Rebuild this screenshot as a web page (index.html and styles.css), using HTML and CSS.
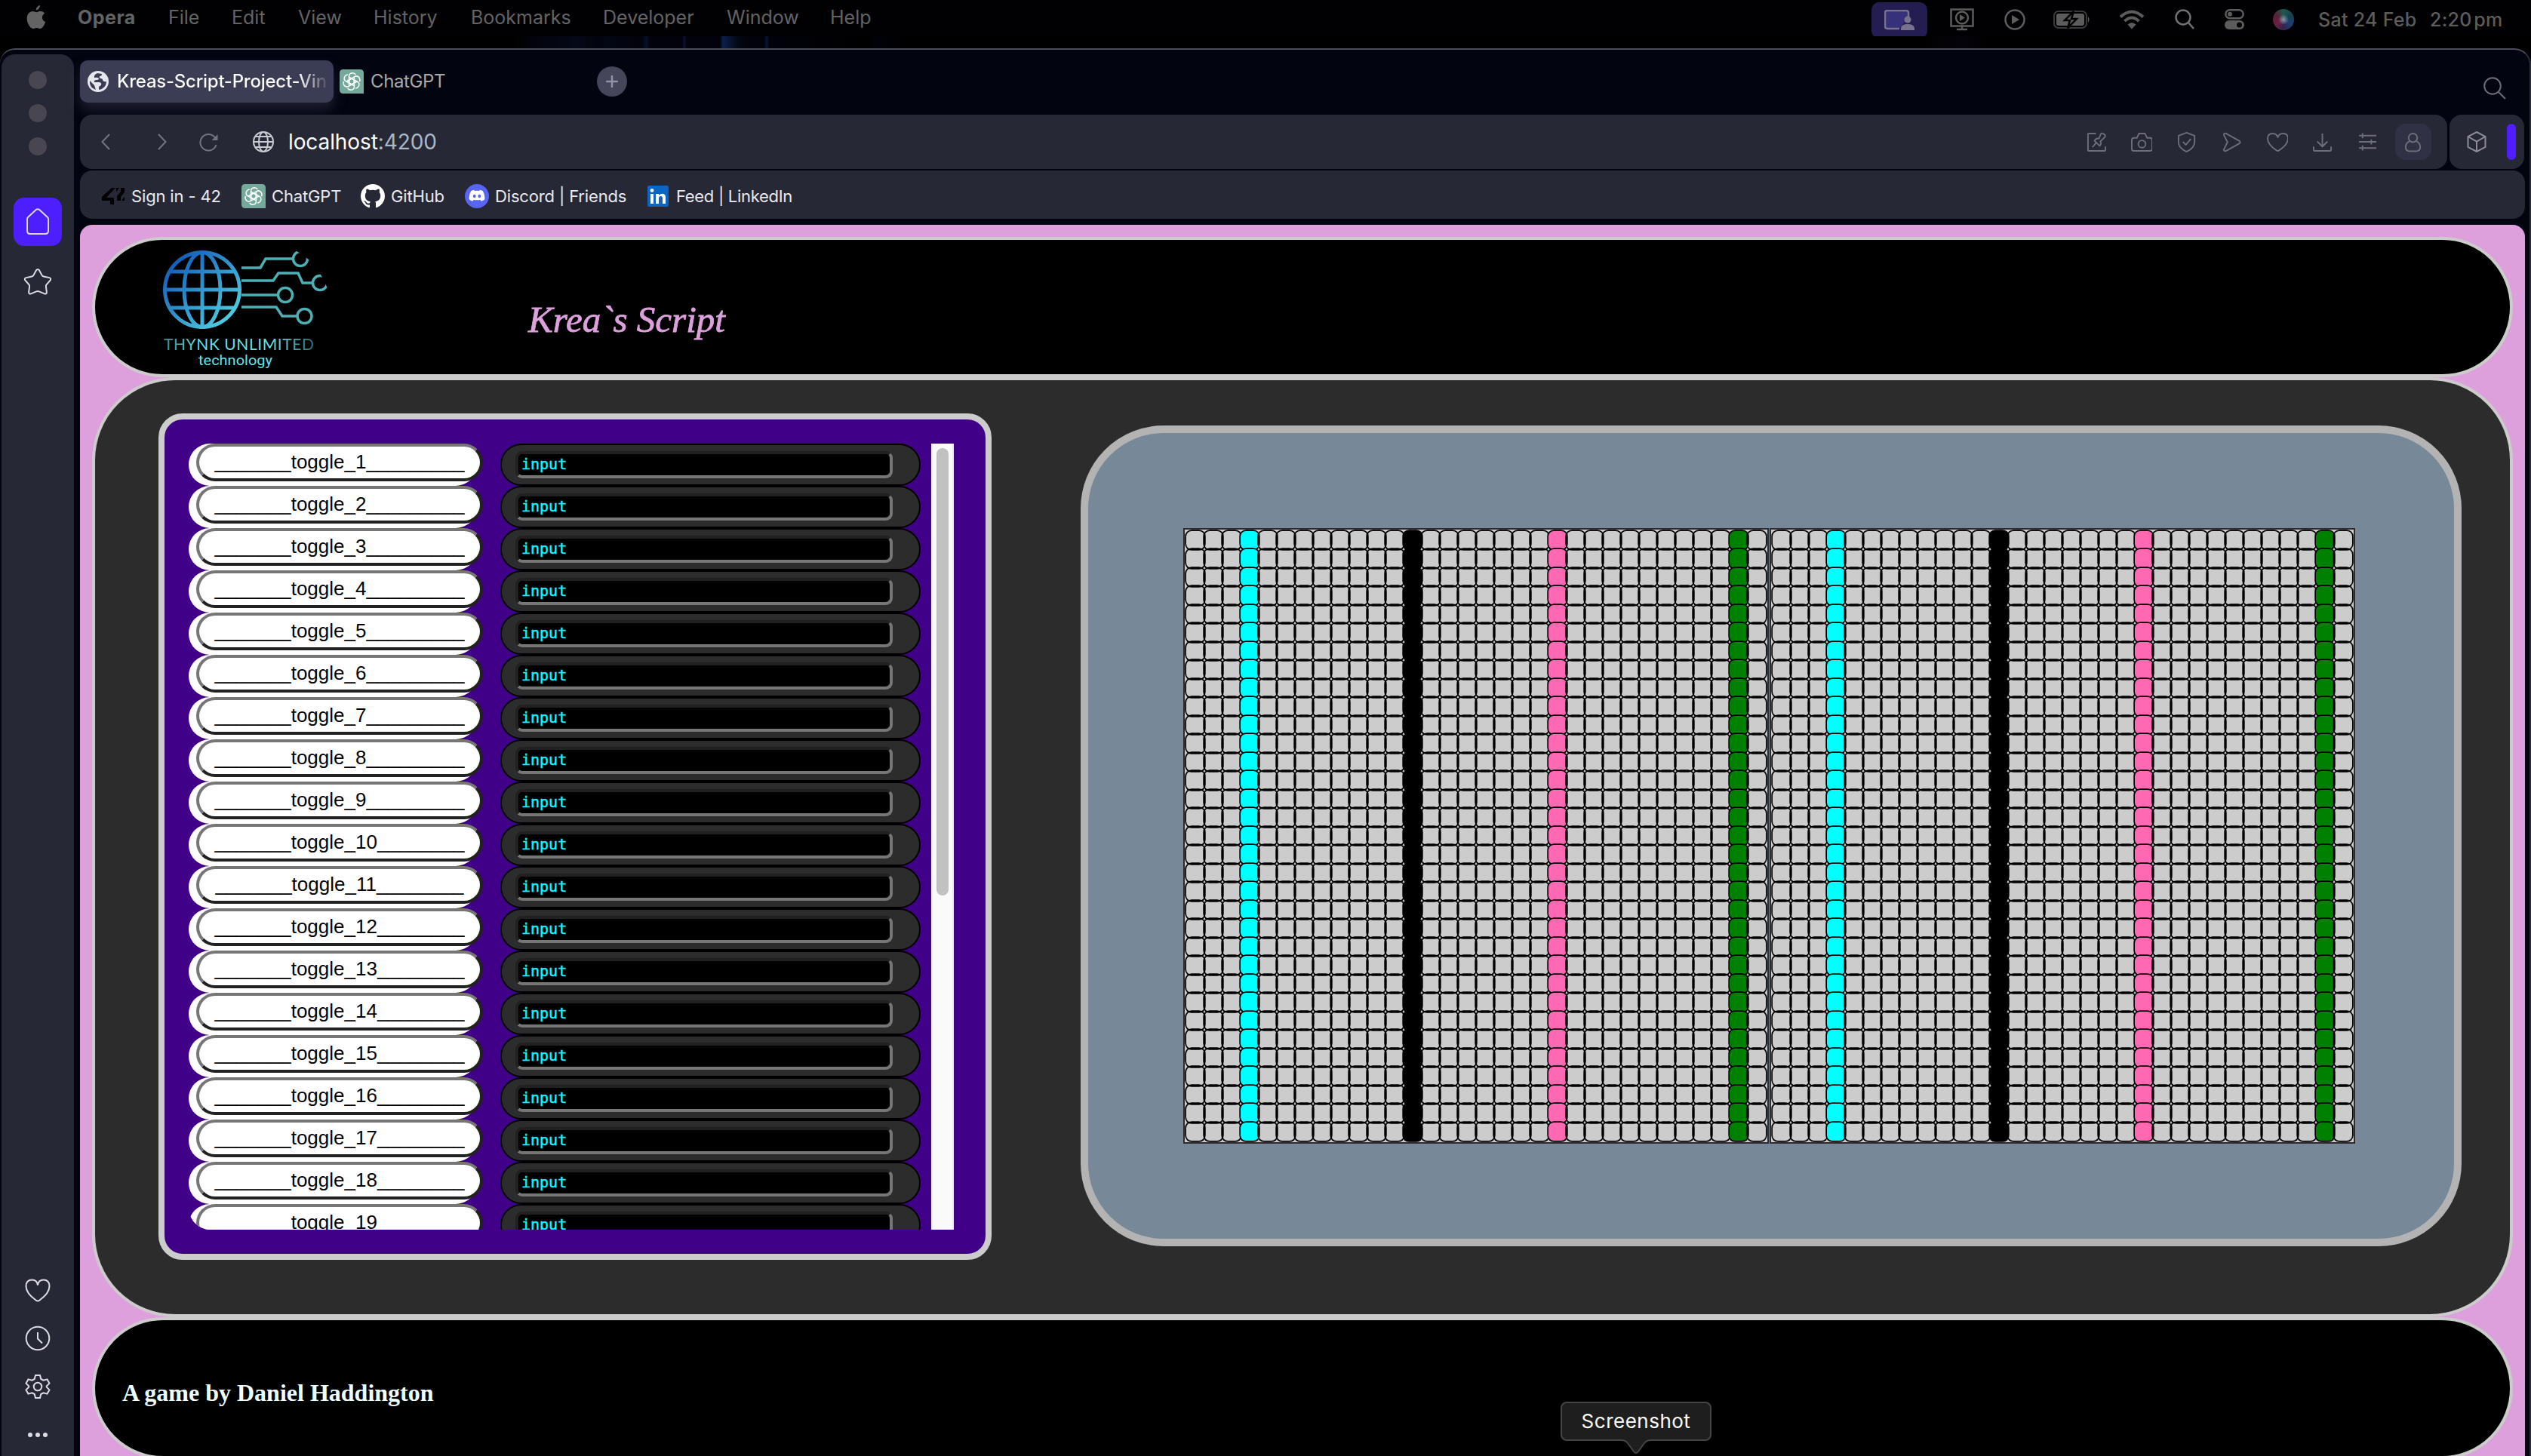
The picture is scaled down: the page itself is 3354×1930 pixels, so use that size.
FILE: index.html
```html
<!DOCTYPE html>
<html lang="en">
<head>
<meta charset="utf-8">
<title>Kreas-Script-Project</title>
<link rel="stylesheet" href="styles.css">
</head>
<body>
<header class="menubar">
  <nav class="menus">
    <svg class="apple" width="26" height="32" viewBox="0 0 26 32"><path d="M18 0c.3 3-2.300 6.400-5.200 6.500C12.500 3.600 15.200.500 18 0zM13.400 9.200c1.200 0 2.900-1.500 5.300-1.500 2.200 0 4.300 1.200 5.500 3-4.800 2.900-4 9.400 1 11.300C24 25.500 21.400 31 18.400 31c-1.800 0-2.500-1.100-4.800-1.100S10.500 31 8.900 31C5 31 .7 23.800.7 17.600.7 11.500 4.500 8.100 8.100 8.100c2.300 0 4 1.100 5.300 1.100z"/></svg>
    <b class="m">Opera</b><span class="m">File</span><span class="m">Edit</span><span class="m">View</span><span class="m">History</span><span class="m">Bookmarks</span><span class="m">Developer</span><span class="m">Window</span><span class="m">Help</span>
  </nav>
  <div class="status">
    <span class="share"><svg width="40" height="28" viewBox="0 0 40 28"><path d="M32 10V4q0-3-3-3H4Q1 1 1 4v18q0 3 3 3h16" fill="#37307a" stroke="#77738f" stroke-width="2.500"/><circle cx="31" cy="13" r="4.500" fill="#77738f"/><path d="M22 27v-3q1-5 9-5t9 5v3z" fill="#77738f"/></svg></span>
    <svg width="32" height="30" viewBox="0 0 32 30"><path d="M1.500 1.500h29v22h-29zM16 24v4M9 28h14" class="g"/><circle cx="16" cy="12.500" r="8" class="g"/><path d="M13 8l7 4.500-7 4.500z" class="gf"/></svg>
    <svg width="28" height="28" viewBox="0 0 28 28"><circle cx="14" cy="14" r="12.500" class="g"/><path d="M10 8l10 6-10 6z" class="gf"/></svg>
    <svg width="49" height="24" viewBox="0 0 49 24"><rect x="1" y="1" width="43" height="22" rx="6" class="g thin"/><rect x="4" y="4" width="37" height="16" rx="3" class="gf"/><path d="M46 8q3 4 0 8z" class="gf"/><path d="M27 1L15 13h7l-3 10 12-12h-7z" fill="#5c5c5c" stroke="#000" stroke-width="2.500"/></svg>
    <svg width="34" height="26" viewBox="0 0 34 26"><path d="M2 9.500q15-14 30 0M7.500 15q9.500-9 19 0" class="g wifi"/><path d="M11.500 19.500q5.500-5 11 0L17 25.500z" class="gf"/></svg>
    <svg width="26" height="28" viewBox="0 0 26 28"><circle cx="11" cy="11" r="9.500" class="g w"/><path d="M18 18l7 8" class="g w"/></svg>
    <svg width="26" height="28" viewBox="0 0 26 28"><rect x="1.300" y="1.300" width="23.400" height="11" rx="5.500" class="g"/><circle cx="7" cy="6.800" r="3" class="gf"/><rect y="15" width="26" height="12" rx="6" class="gf"/><circle cx="19.500" cy="21" r="3.500" fill="#060606"/></svg>
    <i class="siri"></i>
    <span class="m t">Sat 24 Feb</span><span class="m t">2:20&#8202;pm</span>
  </div>
</header>
<div class="wall"></div>
<div class="window">
  <aside class="side">
    <div class="lights"><i></i><i></i><i></i></div>
    <span class="home"><svg width="32" height="36" viewBox="0 0 32 36"><path d="M2 14.500q0-1.500 1-2.500L13.500 2.200q2.500-2 5 0L29 12q1 1 1 2.500V30q0 4-4 4H6q-4 0-4-4z"/></svg></span>
    <svg class="star" width="38" height="38" viewBox="0 0 38 38"><path d="M17 3.200q2-2.400 4 0l3.700 6.900q.7 1.200 2.100 1.500l7.700 1.500q2.600.8 1.200 3.300l-5 5.800q-1 1.200-.8 2.600l1 7.400q-.1 2.900-2.900 2.200l-7.200-3q-1.800-.7-3.600 0l-7.200 3q-2.800.7-2.900-2.200l1-7.400q.2-1.400-.8-2.600l-5-5.800q-1.400-2.500 1.200-3.300l7.700-1.500q1.400-.3 2.100-1.500z"/></svg>
    <div class="tools">
      <svg width="34" height="34" viewBox="0 0 34 34"><path d="M17 10.500Q16 3.500 9.500 3.500 1.500 3.500 1.500 12q0 9 13 18.500 2.500 2 5 0 13-9.500 13-18.500 0-8.500-8-8.500-6.500 0-7.500 7z"/></svg>
      <svg width="34" height="34" viewBox="0 0 34 34"><circle cx="17" cy="17" r="15.300"/><path d="M17 9v8.500l6 6"/></svg>
      <svg width="34" height="34" viewBox="0 0 34 34"><path d="M14 2h6l1.300 5 3.200 1.700 5-1.300 3 5.200-3.700 3.700v1.400l3.700 3.700-3 5.200-5-1.300L21.300 27 20 32h-6l-1.300-5-3.200-1.700-5 1.300-3-5.200 3.700-3.700v-1.400L1.500 12.600l3-5.200 5 1.300L12.700 7z"/><circle cx="17" cy="17" r="5.300"/></svg>
      <svg width="34" height="34" viewBox="0 0 34 34"><g fill="#dcdce4" stroke="none"><circle cx="7" cy="17" r="3"/><circle cx="17" cy="17" r="3"/><circle cx="27" cy="17" r="3"/></g></svg>
    </div>
  </aside>
  <div class="browser">
    <div class="tabs">
      <div class="tab on"><svg width="28" height="28" viewBox="0 0 28 28"><circle cx="14" cy="14" r="14" fill="#e4e8ee"/><path d="M13 3q-5 2-4 6 5-1 6 1 0 2-4 2-3 1-2 3h6q4 0 3 4-3 1-3 3v3q10-2 10-11-4 1-5-2 0-2-3-2-2-1-1-3 3 0 3-3zM3 13l6 6q1 3 2 6Q2 22 3 13z" fill="#3b3d54"/></svg><span class="tt">Kreas-Script-Project-Vin</span></div>
      <div class="tab"><svg width="32" height="32" viewBox="0 0 32 32"><use href="#gpt"/></svg><span class="name">ChatGPT</span></div>
      <i class="plus"><svg width="16" height="16" viewBox="0 0 16 16"><path d="M8 1v14M1 8h14" stroke="#9193ab" stroke-width="2.500" stroke-linecap="round"/></svg></i>
      <svg class="find" width="30" height="30" viewBox="0 0 30 30"><circle cx="12" cy="12" r="10.800"/><path d="M20 20l9 9"/></svg>
    </div>
    <div class="row">
      <div class="bar addr">
        <svg class="nav" width="12" height="22" viewBox="0 0 12 22"><path d="M11 1L1.500 11 11 21"/></svg>
        <svg class="nav" width="12" height="22" viewBox="0 0 12 22"><path d="M1 1l9.500 10L1 21"/></svg>
        <svg class="nav" width="26" height="26" viewBox="0 0 26 26"><path d="M22.500 17A10.800 10.800 0 1 1 21 7.500"/><path d="M24.500 3v8h-8z" fill="#737480" stroke="none"/></svg>
        <svg class="nav" width="28" height="28" viewBox="0 0 28 28"><g stroke="#c9ccd0" stroke-width="2"><circle cx="14" cy="14" r="13"/><ellipse cx="14" cy="14" rx="6" ry="13"/><path d="M1 14h26M3.500 7h21M3.500 21h21"/></g></svg>
        <p class="url">localhost<span>:4200</span></p>
        <div class="acts">
          <svg viewBox="0 0 28 28"><path d="M13 2H3q-1 0-1 1v22q0 1 1 1h22q1 0 1-1v-5M13 15l-5 6M11 12l7 7q3-3 1-6l6-6q2-2-1-4t-4-1l-3 7q-4-1-6 3z"/></svg>
          <svg viewBox="0 0 30 28"><path d="M4 8h4l3-6h8l3 6h4q3 0 3 3v12q0 3-3 3H4q-3 0-3-3V11q0-3 3-3z"/><circle cx="15" cy="16.500" r="5"/></svg>
          <svg viewBox="0 0 26 28"><path d="M13 1l11 4v9q0 8-11 13Q2 22 2 14V5z"/><path d="M8 13.500l4 4 7-8"/></svg>
          <svg viewBox="0 0 26 28"><path d="M2 4q0-3 3-2l18 10q3 2 0 4L5 26q-3 1-3-2l5-10z"/></svg>
          <svg viewBox="0 0 30 28"><path d="M15 8Q14 2 8 2 1 2 1 9q0 8 12 16 2 2 4 0Q29 17 29 9q0-7-7-7-6 0-7 6z"/></svg>
          <svg viewBox="0 0 26 28"><path d="M13 2v18M6 13l7 7 7-7M1 20v4q0 2 2 2h20q2 0 2-2v-4"/></svg>
          <svg viewBox="0 0 26 28"><path d="M1 5h24M1 13.500h24M1 22h24M6 1.500v7M18 10v7M6 18.500v7"/></svg>
          <span class="me"><svg viewBox="0 0 26 28"><circle cx="13" cy="8" r="6"/><path d="M8.500 12.500Q3 15 3 20.500 3 26.500 9 26.500h8q6 0 6-6 0-5.500-5.500-8"/></svg></span>
        </div>
      </div>
      <div class="bar ext"><svg width="26" height="28" viewBox="0 0 26 28"><path d="M13 1l11.500 6v14L13 27 1.500 21V7zM1.500 7L13 13.500 24.500 7M13 13.500V27"/></svg><i></i></div>
    </div>
    <div class="bar marks">
      <span><svg width="32" height="32" viewBox="0 0 32 32"><path d="M14 5L1 17v5h11v5h5v-9H7L19 5zM20 5h4l-4 5zM31 5v6l-5 6v5h-5v-6l5-6V5zM31 17v5h-4z" fill="#000"/></svg><em>Sign in - 42</em></span>
      <span><svg width="32" height="32" viewBox="0 0 32 32"><use href="#gpt"/></svg><em>ChatGPT</em></span>
      <span><svg width="32" height="32" viewBox="0 0 16 16"><path fill="#fff" d="M8 0C3.580 0 0 3.580 0 8c0 3.540 2.290 6.530 5.470 7.590.4.070.55-.17.55-.38 0-.19-.01-.82-.01-1.490-2.010.37-2.530-.49-2.690-.94-.09-.23-.48-.94-.82-1.130-.28-.15-.68-.52-.01-.53.63-.01 1.080.58 1.230.82.72 1.210 1.870.87 2.330.66.07-.52.28-.87.51-1.070-1.780-.2-3.640-.89-3.640-3.950 0-.87.31-1.590.82-2.150-.08-.2-.36-1.020.08-2.120 0 0 .67-.21 2.200.82.64-.18 1.320-.27 2-.27s1.360.09 2 .27c1.530-1.040 2.200-.82 2.200-.82.44 1.100.16 1.920.08 2.120.51.56.82 1.270.82 2.150 0 3.070-1.870 3.750-3.650 3.950.29.25.54.73.54 1.480 0 1.070-.01 1.930-.01 2.200 0 .21.15.46.55.38A8.010 8.010 0 0 0 16 8c0-4.420-3.580-8-8-8z"/></svg><em>GitHub</em></span>
      <span><svg width="32" height="32" viewBox="0 0 32 32"><circle cx="16" cy="16" r="16" fill="#5865f2"/><path d="M13 9q3-.6 6 0l.8-1.300q2.200.4 4 1.500 3 5 2.500 11-2 1.800-4.600 2.500l-1.200-2q-4.500 1.300-9 0l-1.200 2q-2.600-.7-4.600-2.500-.5-6 2.500-11 1.800-1.100 4-1.500z" fill="#fff"/><ellipse cx="12.700" cy="16" rx="1.900" ry="2.200" fill="#5865f2"/><ellipse cx="19.300" cy="16" rx="1.900" ry="2.200" fill="#5865f2"/></svg><em>Discord | Friends</em></span>
      <span><svg width="32" height="32" viewBox="0 0 32 32"><rect x="2" y="2" width="28" height="28" rx="2" fill="#0a66c2"/><path fill="#fff" d="M6 13h4v13H6zM13 13h4v2q4-4 8-1 1 1 1 4v8h-4v-7q0-3-2.500-3T17 19v7h-4z"/><circle cx="8" cy="8.500" r="2.400" fill="#fff"/></svg><em class="feed">Feed | LinkedIn</em></span>
    </div>
    <div class="page">
      <div class="head">
        <svg width="226" height="166" viewBox="214 326 226 166" fill="none">
          <defs><linearGradient id="sea" gradientUnits="userSpaceOnUse" x1="232" y1="348" x2="304" y2="422"><stop offset="0" stop-color="#1460bb"/><stop offset="1" stop-color="#4fcbe0"/></linearGradient>
          <linearGradient id="fade" x1="0" x2="1" y1="0" y2="0"><stop offset="0" stop-color="#3d878c"/><stop offset=".25" stop-color="#66e3ea"/><stop offset=".72" stop-color="#66e3ea"/><stop offset="1" stop-color="#2f6a6e"/></linearGradient>
          <clipPath id="oval"><path d="M214 326h170l8 6 17 12 15 18 10 20v110H214z"/></clipPath></defs>
          <g stroke="url(#sea)" stroke-width="5"><circle cx="268" cy="384" r="49.500"/><ellipse cx="268" cy="384" rx="24" ry="49.500"/><path d="M268.010 334L268 434M225 360h86M218 384h100M225 408h86"/></g>
          <g stroke="#4cb0b5" stroke-width="3.500" clip-path="url(#oval)"><path d="M320 355h25l7-12h37M320 372h42l7-10h26l6 13h13M320 391h49M320 407h46l8 12h20"/><circle cx="398" cy="343" r="9.500"/><circle cx="424" cy="375" r="9.500"/><circle cx="378" cy="391" r="9.500"/><circle cx="403.500" cy="419" r="9.500"/></g>
          <text x="217" y="464" textLength="199" font-family="Lato" font-size="21" fill="url(#fade)">THYNK UNLIMITED</text>
          <text x="263" y="484" textLength="98" lengthAdjust="spacingAndGlyphs" font-family="Roboto" font-size="18" fill="#66e3ea">technology</text>
        </svg>
        <h1>Krea`s Script</h1>
      </div>
      <div class="main">
        <div class="panel">
          <div class="toggles" id="toggles"></div>
          <div class="inputs" id="inputs"></div>
          <div class="track"><i></i></div>
        </div>
        <div class="board"><div class="mem"></div><div class="mem"></div></div>
      </div>
      <div class="foot"><h3>A game by Daniel Haddington</h3></div>
    </div>
  </div>
</div>
<div class="tip"><span>Screenshot</span><svg width="40" height="20" viewBox="0 0 40 20"><path d="M0 0v1q6 0 9 4l8 11q3 4 6 0l8-11q3-4 9-4V0z" fill="#1e1e1e"/><path d="M0 1q6 0 9 4l8 11q3 4 6 0l8-11q3-4 9-4" fill="none" stroke="#454545" stroke-width="2"/></svg></div>
<svg width="0" height="0" class="defs"><symbol id="gpt" viewBox="0 0 32 32"><path d="M0 5q0-5 5-5h22q5 0 5 5v27H5q-5 0-5-5z" fill="#74aa9c"/><g fill="none" stroke="#fff" stroke-width="1.500"><g id="petal"><path d="M12.500 18V9.500q0-4.500 4.500-4.700 3 0 4.300 2.200M12.500 18l3.500 2 7.300-4.200"/></g><use href="#petal" transform="rotate(60 16 16)"/><use href="#petal" transform="rotate(120 16 16)"/><use href="#petal" transform="rotate(180 16 16)"/><use href="#petal" transform="rotate(240 16 16)"/><use href="#petal" transform="rotate(300 16 16)"/></g></symbol></svg>
<script src="script.js"></script>
</body>
</html>
```
FILE: script.js
```js
// Fill the toggle and input lists
const toggles = document.getElementById('toggles');
const inputs = document.getElementById('inputs');
for (let i = 1; i <= 19; i++) {
  const row = document.createElement('div');
  row.className = 'toggle';
  const button = document.createElement('button');
  button.textContent = '_______toggle_' + i + '_'.repeat(i < 10 ? 9 : 8);
  row.append(button);
  toggles.append(row);

  const slot = document.createElement('div');
  slot.className = 'slot';
  const field = document.createElement('div');
  field.className = 'field';
  field.textContent = 'input';
  slot.append(field);
  inputs.append(slot);
}

// Each memory block is 32 columns by 33 rows, with four marked columns
const marks = { 3: 'cyan', 12: 'black', 20: 'pink', 30: 'green' };
for (const mem of document.querySelectorAll('.mem')) {
  for (let r = 0; r < 33; r++) {
    for (let c = 0; c < 32; c++) {
      const cell = document.createElement('i');
      if (marks[c]) cell.className = marks[c];
      mem.append(cell);
    }
  }
}
```
FILE: styles.css
```css
* { box-sizing: border-box; }
body { margin: 0; width: 3354px; height: 1930px; overflow: hidden; background: #000; font-family: Inter, sans-serif; display: flex; flex-direction: column; position: relative; }
h1, h3, p { margin: 0; }
svg { display: block; flex: none; }
.defs { position: absolute; }

.menubar { height: 48px; flex: none; display: flex; justify-content: space-between; background: #010103; color: #636363; font-size: 25px; }
.menus { display: grid; grid-template-columns: 68px 120px 84px 88px 100px 129px 175px 164px 137px 100px; padding-left: 35px; align-items: center; height: 45px; }
.menus b { font-weight: 700; letter-spacing: .5px; }
.m { white-space: nowrap; }
.apple { fill: #636363; }
.status { width: 874px; display: grid; grid-template-columns: 104px 72px 65px 87px 74px 66px 64px 60px 148px 134px; align-items: center; height: 45px; }
.share { width: 74px; height: 48px; margin-top: 3px; background: #241d52; border-radius: 10px; display: grid; place-items: center; }
.g { fill: none; stroke: #5c5c5c; stroke-width: 2.5; }
.wifi { stroke-width: 4; }
.thin { stroke: #3a3a3a; stroke-width: 2; }
.w { stroke: #707070; }
.gf { fill: #5c5c5c; }
.t { color: #5c5c5c; font-weight: 500; letter-spacing: .3px; }
.siri { width: 28px; height: 28px; border-radius: 50%; background: radial-gradient(circle, #7d9aa8 0, transparent 35%), conic-gradient(#1c5b50, #17414f, #1c3f73, #33234f, #6d1f42, #5a2034, #1c5b50); }
.wall { height: 16px; flex: none; background: linear-gradient(90deg, transparent 680px, #02030a 700px, #040818 765px, #02040c 790px, #030714 805px, #01020a 850px, #07102a 857px, #01020a 861px, #01020a 904px, #081333 907px, #01020a 910px, #01020a 954px, #0b1e4c 958px, #040a18 975px, #01020a 990px, #01020a 1013px, #09173c 1016px, #01020a 1019px, #000 1150px, #01020a 1160px, #000 1200px, #000 2540px, #05030a 2600px, #000 2640px); }

.window { flex: 1; min-height: 0; display: flex; gap: 8px; background: #020410; border: 2px solid #4b4c55; border-right-color: #2c2d3c; border-left: 0; border-bottom: 0; border-radius: 20px 22px 0 0; padding: 6px 6px 0 2px; }
.side { width: 96px; flex: none; background: #272835; border-radius: 18px 18px 0 0; display: flex; flex-direction: column; align-items: center; padding-top: 22px; }
.lights { display: flex; flex-direction: column; gap: 20px; }
.lights i { width: 24px; height: 24px; border-radius: 50%; background: #474651; }
.side svg { fill: none; stroke: #dcdce4; stroke-width: 2; }
.home { width: 64px; height: 64px; margin-top: 56px; border-radius: 14px; background: #4d1fff; display: grid; place-items: center; }
.star { margin-top: 29px; }
.tools { margin-top: auto; display: flex; flex-direction: column; gap: 30px; padding-bottom: 11px; }

.browser { width: 3240px; display: flex; flex-direction: column; }
.tabs { height: 80px; padding-top: 8px; display: flex; flex: none; }
.tab { height: 55px; display: flex; align-items: center; gap: 9px; margin-left: 8px; color: #a9a9ab; font-size: 24px; white-space: nowrap; }
.tab.on { width: 336px; height: 56px; margin-left: 0; padding-left: 10px; gap: 11px; background: #3b3d54; border-radius: 10px; color: #fff; box-shadow: 0 10px 18px rgba(80, 82, 110, .35); overflow: hidden; font-weight: 500; }
.tt { letter-spacing: -.25px; padding-bottom: 1px; background: linear-gradient(90deg, #fff 240px, #3b3d54 282px); -webkit-background-clip: text; background-clip: text; color: transparent; }
.name { letter-spacing: -.4px; }
.plus { width: 40px; height: 40px; border-radius: 50%; background: #45465a; margin: 8px 0 0 201px; display: grid; place-items: center; }
.find { fill: none; stroke: #6d6e78; stroke-width: 2; margin: 22px 25px 0 auto; }
.row { display: flex; gap: 3px; flex: none; }
.bar { background: #272835; border-radius: 16px; }
.addr { width: 3137px; height: 72px; display: flex; align-items: center; padding: 0 15px 0 28px; }
.nav { fill: none; stroke: #737480; stroke-width: 2; margin-right: 63px; }
.nav:nth-child(2) { margin-right: 43px; }
.nav:nth-child(3) { margin-right: 45px; }
.nav:nth-child(4) { margin-right: 19px; }
.url { font-size: 28px; letter-spacing: -.1px; color: #fff; white-space: nowrap; }
.url span { color: #a9b8c6; }
.acts { margin-left: auto; display: grid; grid-template-columns: repeat(8, 60px); place-items: center; }
.acts svg { height: 27px; fill: none; stroke: #6d6e7a; stroke-width: 2; }
.me { width: 48px; height: 48px; border-radius: 14px; background: #303144; display: grid; place-items: center; }
.ext { width: 99px; height: 72px; display: flex; align-items: center; justify-content: space-between; padding: 0 11px 0 23px; }
.ext svg { fill: none; stroke: #8b8c96; stroke-width: 2; }
.ext i { width: 12px; height: 48px; border-radius: 6px; background: #4d1fff; }
.marks { height: 64px; margin-top: 2px; flex: none; display: grid; grid-template-columns: 186px 158px 138px 240px 300px; padding: 4px 0 0 28px; color: #e9eaf0; font-size: 22px; line-height: 28px; align-items: center; align-content: center; }
.marks span { display: flex; align-items: center; gap: 8px; white-space: nowrap; }
.marks em { font-style: normal; letter-spacing: -.15px; }
.marks .feed { letter-spacing: -.3px; }

.page { flex: 1; min-height: 0; margin-top: 8px; background: #dda0dd; border-radius: 16px 16px 0 0; padding: 16px 16px 0; overflow: hidden; }
.head { height: 186px; background: #000; border: 4px solid #ccc; border-radius: 93px; display: flex; padding: 8px 0 0 88px; }
.head h1 { margin: 68px 0 0 260px; color: #dda0dd; font: italic 400 49px/60px "Liberation Serif", serif; -webkit-text-stroke: .8px #dda0dd; white-space: nowrap; }
.main { height: 1246px; background: #2c2c2c; border: 4px solid #ccc; border-radius: 110px; display: flex; align-items: flex-start; padding: 44px 0 0 84px; }
.panel { width: 1104px; height: 1122px; border: 8px solid #ccc; border-radius: 32px; background: #400088; padding: 32px; display: flex; }
.toggles { width: 390px; height: 1042px; overflow: hidden; border-bottom-left-radius: 29px; }
.toggle { width: 382px; height: 56px; border-radius: 28px; background: #fdfdfe; padding-left: 10px; }
.toggle button { display: block; width: 380px; height: 50px; margin: 0; padding: 0 0 2px; border: 4px solid; border-color: #767676 #212121 #212121 #767676; border-radius: 25px; background: #fff; color: #000; font: 26px "Liberation Sans", sans-serif; white-space: nowrap; }
.inputs { width: 557px; height: 1042px; margin-left: 23px; overflow: hidden; }
.slot { height: 56px; border: 2px solid #000; border-radius: 28px; background: #2c2c2c; padding: 8px 0 0 18px; }
.field { width: 500px; height: 36px; border: 4px solid; border-color: #212121 #767676 #767676 #212121; border-radius: 9px; background: #000; color: #0ff; padding-left: 4px; font: 20px/27px "DejaVu Sans Mono", monospace; -webkit-text-stroke: .4px #0ff; }
.track { width: 30px; height: 1042px; margin-left: 14px; background: #fafafa; border: solid #ececec; border-width: 0 2px; padding: 6px 5px; }
.track i { display: block; width: 16px; height: 593px; border-radius: 8px; background: #c1c1c1; }
.board { width: 1830px; height: 1088px; margin: 16px 0 0 118px; border: 10px solid #b3b3b3; border-radius: 110px; background: #789; padding: 126px; display: flex; gap: 1px; }
.mem { width: 776px; height: 816px; flex: none; border: 2px solid #2c2c2c; background: #ccc; padding: 2px; display: grid; grid-template: repeat(33, 1fr) / repeat(32, 24px); }
.mem i { border-radius: 7px; box-shadow: 0 0 0 1.7px #000; }
.mem .cyan { background: #0ff; }
.mem .black { background: #000; }
.mem .pink { background: #ff69b4; }
.mem .green { background: #008000; }
.foot { height: 188px; background: #000; border: 4px solid #ccc; border-radius: 94px; padding: 78px 0 0 36px; }
.foot h3 { color: azure; font: bold 32px/37px "Liberation Serif", serif; }

.tip { position: absolute; left: 2068px; top: 1858px; width: 200px; height: 52px; background: #1e1e1e; border: 2px solid #454545; border-radius: 8px; display: grid; place-items: center; color: #fff; font-size: 26px; letter-spacing: .5px; padding-bottom: 2px; }
.tip svg { position: absolute; left: 78px; top: 48px; }
```
